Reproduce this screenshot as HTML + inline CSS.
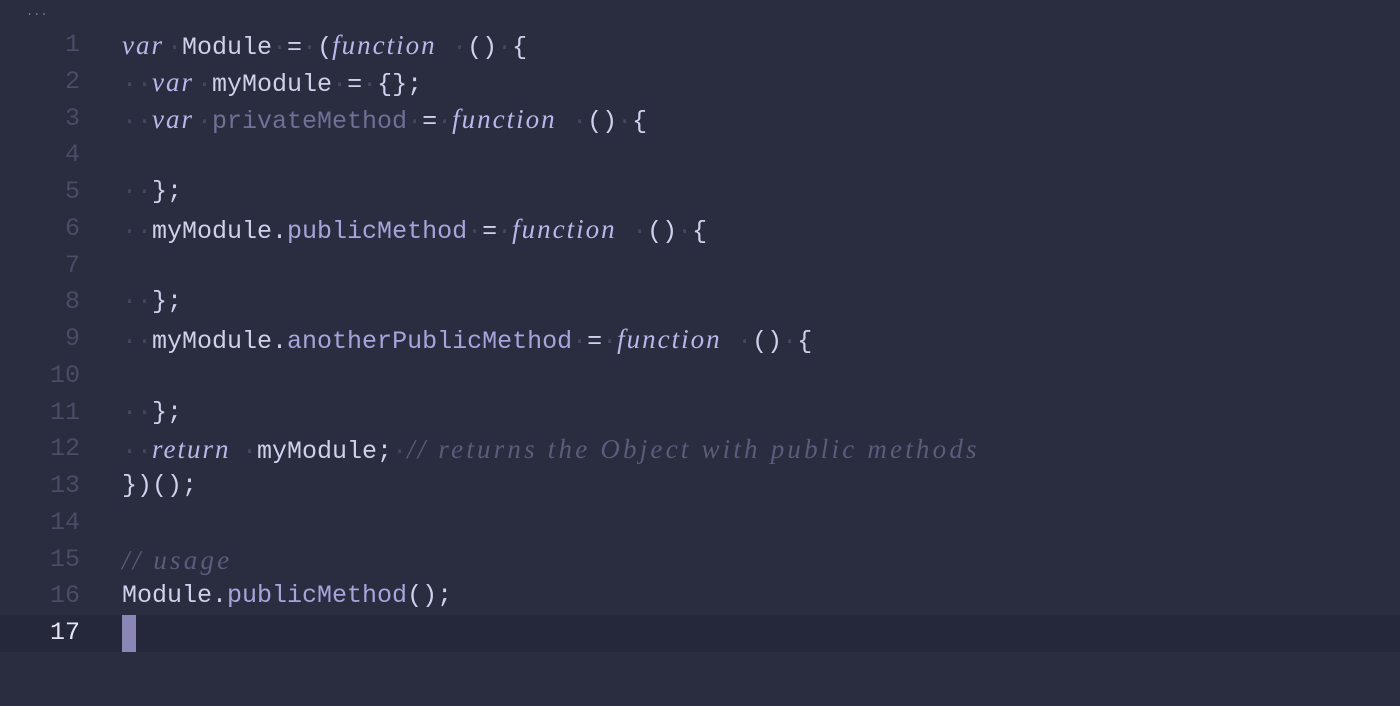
<!DOCTYPE html><html><head><style>
body{margin:0;width:1400px;height:706px;background:#2a2c3f;overflow:hidden;font-family:"Liberation Mono","DejaVu Sans Mono",monospace;font-size:25px;}
.l{position:absolute;left:0;height:36.75px;line-height:36.75px;white-space:pre;width:1400px}
.n{position:absolute;left:0;width:80px;text-align:right;color:#4a4c68}
.c{position:absolute;left:122px;color:#d0d0ec}
.k,.cm{display:inline-block;font-family:"Liberation Serif",serif;font-style:italic;font-size:27px;letter-spacing:2px}
.k{color:#b9b7ea}
.p{color:#a7a4dc}.d{color:#6f7096}.cm{color:#5a5c7c;letter-spacing:3.2px}
.w{color:#45475f}
.dots{position:absolute;left:26px;top:5px;color:#7a7c98;font-size:12px}
</style></head><body>
<div class="dots">...</div>
<div class="l" style="top:27px"><span class="n">1</span><span class="c"><span class="k" style="width:45px">var</span><span class="w">·</span>Module<span class="w">·</span>=<span class="w">·</span>(<span class="k" style="width:120px">function</span><span class="w">·</span>()<span class="w">·</span>{</span></div>
<div class="l" style="top:63.75px"><span class="n">2</span><span class="c"><span class="w">··</span><span class="k" style="width:45px">var</span><span class="w">·</span>myModule<span class="w">·</span>=<span class="w">·</span>{};</span></div>
<div class="l" style="top:100.5px"><span class="n">3</span><span class="c"><span class="w">··</span><span class="k" style="width:45px">var</span><span class="w">·</span><span class="d">privateMethod</span><span class="w">·</span>=<span class="w">·</span><span class="k" style="width:120px">function</span><span class="w">·</span>()<span class="w">·</span>{</span></div>
<div class="l" style="top:137.25px"><span class="n">4</span></div>
<div class="l" style="top:174px"><span class="n">5</span><span class="c"><span class="w">··</span>};</span></div>
<div class="l" style="top:210.75px"><span class="n">6</span><span class="c"><span class="w">··</span>myModule.<span class="p">publicMethod</span><span class="w">·</span>=<span class="w">·</span><span class="k" style="width:120px">function</span><span class="w">·</span>()<span class="w">·</span>{</span></div>
<div class="l" style="top:247.5px"><span class="n">7</span></div>
<div class="l" style="top:284.25px"><span class="n">8</span><span class="c"><span class="w">··</span>};</span></div>
<div class="l" style="top:321px"><span class="n">9</span><span class="c"><span class="w">··</span>myModule.<span class="p">anotherPublicMethod</span><span class="w">·</span>=<span class="w">·</span><span class="k" style="width:120px">function</span><span class="w">·</span>()<span class="w">·</span>{</span></div>
<div class="l" style="top:357.75px"><span class="n">10</span></div>
<div class="l" style="top:394.5px"><span class="n">11</span><span class="c"><span class="w">··</span>};</span></div>
<div class="l" style="top:431.25px"><span class="n">12</span><span class="c"><span class="w">··</span><span class="k" style="width:90px">return</span><span class="w">·</span>myModule;<span class="w">·</span><span class="cm" style="width:615px">// returns the Object with public methods</span></span></div>
<div class="l" style="top:468px"><span class="n">13</span><span class="c">})();</span></div>
<div class="l" style="top:504.75px"><span class="n">14</span></div>
<div class="l" style="top:541.5px"><span class="n">15</span><span class="c"><span class="cm" style="width:120px">// usage</span></span></div>
<div class="l" style="top:578.25px"><span class="n">16</span><span class="c">Module.<span class="p">publicMethod</span>();</span></div>
<div class="l" style="top:615px;background:#25273a"><span class="n" style="color:#e6e6f4">17</span><span style="position:absolute;left:122px;top:0;width:14px;height:36.75px;background:#8a86b6"></span></div>
</body></html>
